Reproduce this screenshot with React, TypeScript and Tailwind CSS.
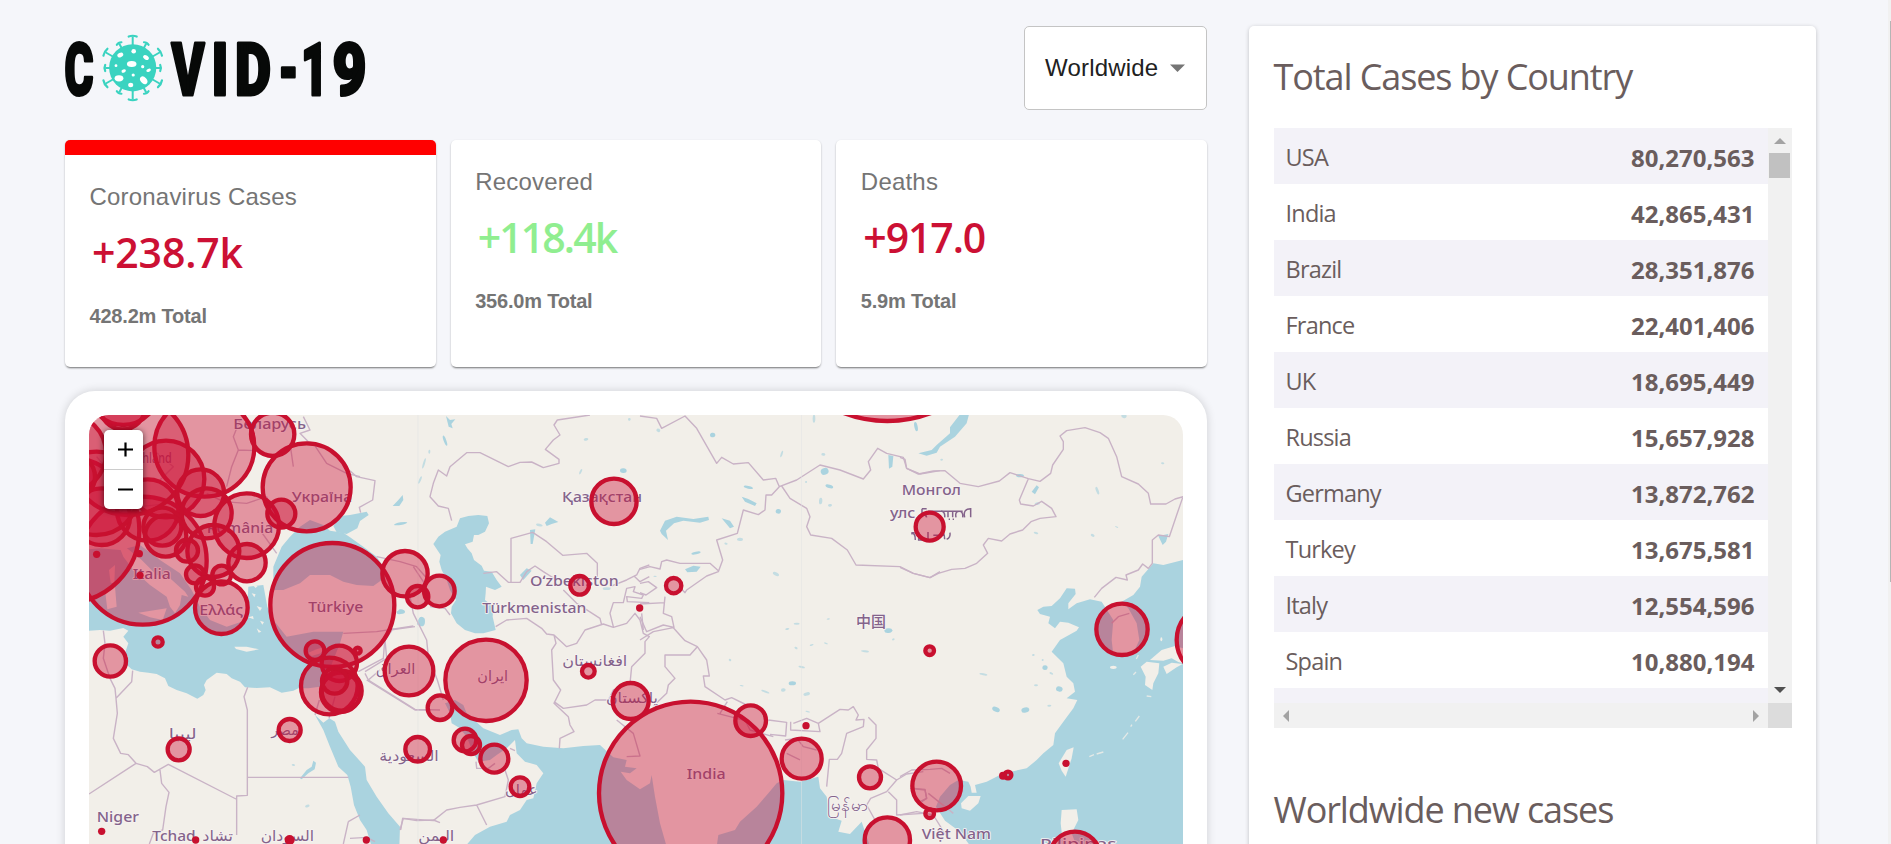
import type { ReactNode } from 'react';

const SANS = "font-['Open_Sans','Noto_Sans',sans-serif]";
const ARIAL = "font-['Liberation_Sans',Arial,sans-serif]";

const countries: [string, string][] = [
  ['USA', '80,270,563'],
  ['India', '42,865,431'],
  ['Brazil', '28,351,876'],
  ['France', '22,401,406'],
  ['UK', '18,695,449'],
  ['Russia', '15,657,928'],
  ['Germany', '13,872,762'],
  ['Turkey', '13,675,581'],
  ['Italy', '12,554,596'],
  ['Spain', '10,880,194'],
  ['Argentina', '8,878,486'],
];

/* Wordmark letters: glyph, x of the ink start, advance width */
const letters: [string, number, number][] = [
  ['C', 64.5, 29],
  ['V', 171.5, 33],
  ['I', 211.5, 17],
  ['D', 235, 36],
  ['-', 278.5, 20],
  ['1', 301, 27],
  ['9', 332.5, 34],
];

function Spike({ angle, from, to, cap }: { angle: number; from: number; to: number; cap: number }) {
  return (
    <g transform={`rotate(${angle})`}>
      <path d={`M0 ${-from}V${-to}`} strokeWidth={2} />
      <path d={`M${-cap} ${-to}Q0 ${-to - 1.5} ${cap} ${-to}`} strokeWidth={2.2} strokeLinecap="round" />
    </g>
  );
}

function Logo() {
  return (
    <svg className="h-[84px] w-[310px] overflow-visible" viewBox="65 26 310 84" role="img" aria-label="COVID-19">
      <g
        fontFamily="Roboto, sans-serif"
        fontWeight={900}
        fontSize={72}
        fill="#070908"
        stroke="#070908"
        strokeWidth={3}
        strokeLinejoin="round"
      >
        {letters.map(([c, x, w]) => (
          <text key={x} x={x} y={94.6} textLength={w} lengthAdjust="spacingAndGlyphs">
            {c}
          </text>
        ))}
      </g>
      <g transform="translate(132.7 68)" stroke="#3ad3c0" fill="none">
        {[0, 180].map((a) => <Spike key={a} angle={a} from={22} to={31.5} cap={4} />)}
        {[90, 270].map((a) => <Spike key={a} angle={a} from={22} to={27.5} cap={3} />)}
        {[60, 120, 240, 300].map((a) => <Spike key={a} angle={a} from={22} to={31.5} cap={4} />)}
        {[29, 151, 209, 331].map((a) => <Spike key={a} angle={a} from={22} to={28} cap={2.6} />)}
      </g>
      <circle cx={132.7} cy={67.8} r={23.6} fill="#3ad3c0" />
      <g fill="#fff">
        <ellipse cx={120.3} cy={55} rx={3.1} ry={2.2} transform="rotate(-25 120.3 55)" />
        <circle cx={133.7} cy={51.3} r={2.3} />
        <ellipse cx={146} cy={57.5} rx={3.1} ry={2.1} transform="rotate(35 146 57.5)" />
        <ellipse cx={131.7} cy={64} rx={4.8} ry={3} />
        <circle cx={116} cy={65.7} r={1.4} />
        <ellipse cx={123.7} cy={71} rx={2.3} ry={1.6} transform="rotate(-25 123.7 71)" />
        <circle cx={142.7} cy={66.7} r={1.6} />
        <ellipse cx={148.6} cy={70.3} rx={2.4} ry={1.5} transform="rotate(-25 148.6 70.3)" />
        <circle cx={133.2} cy={75} r={1.6} />
        <ellipse cx={119} cy={78.3} rx={4.4} ry={3.1} />
        <ellipse cx={143.7} cy={80.3} rx={3} ry={4.4} transform="rotate(-40 143.7 80.3)" />
        <ellipse cx={130.7} cy={85} rx={2.6} ry={2.2} />
      </g>
    </svg>
  );
}

/* The map is split in strips, each with its own origin and three units to a pixel. */
function Strip({ x, y, children }: { x: number; y: number; children: ReactNode }) {
  return <g transform={`translate(${x} ${y}) scale(0.33333)`}>{children}</g>;
}

type C = [number, number, number];
const europe: C[] = [
  [248, 542, 192], [20, 450, 218], [263, 390, 92], [433, 200, 150], [318, 297, 115], [205, 225, 180],
  [422, 338, 70], [440, 400, 75], [560, 437, 97], [740, 322, 132], [638, 163, 65], [664, 401, 42],
  [561, 548, 56], [460, 513, 78], [307, 440, 57], [317, 468, 62], [381, 512, 33], [405, 583, 27],
  [435, 620, 27], [485, 585, 28], [484, 683, 79], [125, 410, 85], [110, 340, 125], [190, 30, 105],
  [188, 80, 68], [20, 220, 118], [40, 290, 65],
];
const africa: C[] = [
  [817, 15, 186], [151, 183, 47], [294, 126, 14], [356, 448, 33], [689, 390, 33], [765, 152, 28],
  [838, 190, 53], [893, 152, 9], [808, 258, 85], [842, 277, 59], [845, 272, 60], [824, 243, 38], [1047, 213, 73],
];
const middle: C[] = [
  [165, 521, 68], [203, 590, 32], [268, 573, 46], [408, 841, 122], [270, 923, 37], [345, 1020, 34],
  [363, 1035, 27], [433, 1076, 42], [510, 1160, 28], [203, 1048, 37], [792, 304, 68], [689, 556, 28],
  [715, 814, 19], [842, 903, 54],
];
const asia: C[] = [
  [152, 1180, 275], [101, 557, 23], [332, 962, 46], [485, 1076, 60], [690, 1132, 33], [742, 1320, 68], [742, -307, 370],
];
const east: C[] = [
  [89, 380, 42], [89, 752, 13], [110, 1158, 73], [89, 1241, 13], [666, 688, 77], [940, 720, 110],
  [324, 1125, 10], [525, 1371, 76],
];

function Circles({ list, dots = [] }: { list: C[]; dots?: C[] }) {
  return (
    <>
      {list.map(([x, y, r], i) => (
        <circle key={i} cx={x} cy={y} r={r} fill="#CC1034" fillOpacity={0.4} stroke="#C8102F" strokeWidth={13} />
      ))}
      {dots.map(([x, y, r], i) => (
        <circle key={`d${i}`} cx={x} cy={y} r={r} fill="#C8102F" />
      ))}
    </>
  );
}

function Label({ x, y, w, size = 45, children }: { x: number; y: number; w: number; size?: number; children: string }) {
  return (
    <text x={x} y={y} fontSize={size} textLength={w} lengthAdjust="spacingAndGlyphs">
      {children}
    </text>
  );
}

function Lakes({ list }: { list: [number, number, number, number][] }) {
  return (
    <>
      {list.map(([x, y, rx, ry], i) => (
        <ellipse
          key={i}
          cx={x}
          cy={y}
          rx={rx}
          ry={ry}
          opacity={rx * ry > 50 ? 1 : 0.65}
          transform={`rotate(${((i * 37) % 50) - 20} ${x} ${y})`}
        />
      ))}
    </>
  );
}

function WorldMap() {
  return (
    <svg className="block h-full w-full" viewBox="89 415 1094 429">
      <rect x={89} y={415} width={1094} height={429} fill="#f2efe9" />
      <g fill="#aad3df">
        <Strip x={60} y={600}>
          <path d="M60 -150L120 -155L180 -150L240 -165L300 -120L360 -80L395 -30L420 20L450 60L500 80L560 60L565 -40L610 -45L622 20L640 60L680 110L760 95L850 95L840 130L800 230L780 260L745 265L715 265L700 272L665 278L630 262L590 264L555 262L540 245L515 235L500 222L470 218L440 240L432 255L437 270L430 285L412 296L380 280L350 270L325 258L315 235L290 222L265 218L240 215L215 208L195 190L205 170L195 160L205 130L190 110L205 92L190 84L150 92L120 90L87 92L60 90Z" />
          <path d="M765 345L790 368L808 355L825 365L835 395L870 450L915 500L920 540L950 590L985 640L1020 680L1018 740L935 740L920 690L900 660L882 615L872 560L862 525L835 500L810 440L790 390Z" />
          <path d="M720 535L740 510L755 500L760 482L768 488L764 508L745 520L725 538Z" />
          <Lakes list={[[742, 618, 7, 4], [700, 495, 5, 3], [1085, 65, 10, 14], [1022, 36, 12, 6]]} />
          <g fill="#f2efe9">
            <path d="M170 -180L245 -120L290 -75L330 -65L375 -25L385 -10L365 -15L360 15L345 40L330 20L320 -10L270 -45L220 -90L190 -130Z" />
            <path d="M235 38L320 25L308 60L270 52Z" />
            <path d="M135 -30L165 -40L170 20L142 28Z" />
            <path d="M147 -90L165 -105L163 -50L152 -52Z" />
            <path d="M523 140L560 140L597 148L560 155L528 147Z" />
            <path d="M405 -60L430 20L450 10L480 70L500 50L540 20L520 -20L562 -55Z" />
            <path d="M575 -20l12 3l-4 9zM590 18l16 5l-6 10zM565 52l14 -4l2 10zM600 62l12 4l-5 8zM575 -48l18 6l-6 6zM590 85l14 10l-8 3z" />
            <path d="M745 158L770 148L795 140L782 160L755 168Z" />
          </g>
        </Strip>
        <Strip x={350} y={400}>
          <path d="M-230 500L-205 440L-180 410L-150 380L-120 360L-80 375L-60 392L-20 398L0 412L40 440L80 470L100 500L95 540L70 558L20 555L-20 545L-60 525L-120 525L-150 550L-200 570L-230 570Z" />
          <path d="M-50 378L-30 348L0 345L50 335L56 345L30 363L22 385L-10 402L-40 397Z" />
          <path d="M355 348L385 345L412 348L417 370L405 395L385 405L372 405L368 425L345 433L352 445L365 460L372 480L395 497L402 512L425 515L440 540L455 560L435 570L420 565L408 560L407 580L405 600L430 620L428 650L437 690L400 700L375 700L345 690L320 670L303 640L305 620L318 600L300 570L290 540L275 510L268 485L272 465L250 432L265 410L285 395L320 380L330 355Z" />
          <path d="M285 910L315 900L340 915L350 940L400 985L450 1005L485 990L505 988L515 1015L530 1030L580 1040L640 1045L700 1038L750 1035L790 1072L830 1080L825 1100L860 1105L840 1120L812 1115L830 1140L870 1168L900 1150L905 1125L915 1190L930 1270L950 1340L345 1340L375 1305L420 1280L470 1265L480 1245L510 1230L530 1200L550 1195L560 1150L580 1120L560 1095L525 1085L500 1060L495 1020L470 1045L440 1065L420 1080L385 1085L370 1060L350 1010L330 985L305 970L300 940Z" />
          <path d="M128 318L145 300L158 285L160 300L148 318ZM288 48L300 60L316 58L304 72L308 85L296 80ZM585 368L600 352L625 366L605 372L590 378ZM540 390L556 388L548 432L542 432ZM510 525L530 505L545 512L520 540Z" />
          <Lakes list={[[285, 122, 4, 16], [222, 190, 3, 16], [238, 155, 3, 6], [152, 371, 20, 4], [210, 663, 6, 14], [155, 634, 10, 6], [820, 212, 10, 7], [708, 118, 7, 4], [692, 215, 3, 9], [568, 375, 10, 4], [770, 566, 12, 4], [838, 58, 4, 4], [210, 240, 3, 12]]} />
        </Strip>
        <Strip x={640} y={400}>
          <path d="M230 1340L235 1305L285 1290L300 1265L350 1220L385 1180L410 1150L430 1140L480 1145L535 1130L540 1165L560 1190L570 1250L605 1262L595 1295L630 1302L665 1265L690 1340Z" />
          <path d="M60 392L75 362L110 350L160 357L205 350L207 360L180 368L130 362L102 370L78 392L84 420L65 402Z" />
          <path d="M135 508L160 497L182 500L170 515L142 517ZM305 290L325 297L350 310L345 318L315 305ZM745 165L760 168L757 200L747 206ZM245 355L270 362L282 380L270 385Z" />
          <Lakes list={[[554, 214, 12, 10], [568, 259, 12, 5], [542, 303, 5, 10], [218, 105, 8, 7], [55, 91, 6, 5], [415, 334, 8, 7], [300, 418, 9, 5], [168, 459, 14, 4], [408, 522, 10, 5], [325, 262, 14, 4], [470, 671, 9, 3], [442, 687, 6, 3], [468, 744, 5, 3], [485, 801, 10, 3], [457, 850, 11, 6], [500, 882, 10, 5], [376, 875, 13, 3], [305, 857, 6, 2], [430, 870, 7, 5], [515, 735, 6, 2], [558, 730, 6, 2], [675, 754, 12, 3], [745, 692, 12, 7], [760, 718, 4, 3], [425, 162, 3, 10], [550, 163, 6, 4], [570, 316, 6, 4], [498, 246, 3, 3], [258, 431, 5, 3], [45, 529, 5, 2], [565, 657, 5, 2], [270, 780, 4, 3], [503, 935, 7, 2], [522, 56, 4, 12], [828, 80, 5, 14]]} />
        </Strip>
        <Strip x={900} y={400}>
          <path d="M212 1340L180 1295L135 1262L108 1220L120 1190L150 1155L175 1140L205 1145L212 1160L215 1178L230 1178L225 1155L260 1145L310 1120L380 1105L410 1080L430 1060L460 1035L465 1000L490 965L520 925L532 900L500 895L525 875L520 850L500 830L490 790L455 755L480 720L530 692L537 682L505 668L480 665L465 685L445 670L450 650L420 642L412 630L430 620L455 618L480 595L500 565L525 566L527 582L505 610L505 628L530 610L570 598L605 605L640 660L635 720L640 765L700 760L718 720L710 670L685 625L665 605L700 585L720 560L725 530L760 490L790 495L850 480L850 1340Z" />
          <path d="M180 43L207 43L200 70L165 110L120 140L110 158L80 167L55 160L95 150L110 135L150 100L150 82Z" />
          <path d="M775 408L805 402L798 425L788 435ZM395 275L410 256L417 262L405 283Z" />
          <Lakes list={[[592, 272, 4, 12], [672, 48, 8, 6], [360, 227, 12, 5], [412, 311, 8, 4], [578, 406, 6, 4], [408, 399, 7, 3], [435, 803, 8, 7], [428, 780, 3, 3], [454, 820, 6, 3], [478, 867, 10, 8], [408, 856, 6, 3], [376, 930, 12, 8], [288, 928, 12, 7], [250, 823, 12, 3], [448, 917, 6, 3], [400, 765, 4, 3], [650, 381, 5, 2], [788, 190, 5, 3], [125, 179, 4, 3]]} />
          <g fill="#f2efe9">
            <path d="M183 1210L205 1188L242 1188L235 1210L210 1232L185 1225Z" />
            <path d="M476 1090L500 1050L521 1042L515 1075L497 1130L485 1112Z" />
            <path d="M485 1230L530 1228L535 1260L515 1300L530 1340L490 1340L482 1270Z" />
            <path d="M722 800L740 785L778 790L775 820L760 850L757 870L735 855L737 830Z" />
            <path d="M750 780L785 750L825 738L850 745L850 790L835 786L815 775L790 782Z" />
            <path d="M790 800L815 788L848 792L830 802L800 822Z" />
            <ellipse cx={640} cy={802} rx={10} ry={5} />
            <ellipse cx={784} cy={718} rx={3} ry={6} />
          </g>
          <g fill="none" stroke="#f2efe9" strokeWidth={4} opacity={0.8}>
            <path d="M718 948l-12 16M696 974l-4 6M684 998l-16 20M568 1070l14 -6M590 1062l20 -6M740 888l14 2M715 765l-6 12M700 824l8 -8" />
          </g>
        </Strip>
      </g>

      <g fill="none" stroke="#c9b3c6" strokeWidth={4.2} strokeLinejoin="round">
        <Strip x={60} y={600}>
          <path d="M130 92L135 130L130 175L150 235L165 265L168 295L215 245L218 212M168 295L172 340L160 415L182 460L205 464L228 490L87 582M228 490L262 500L283 517L325 493L528 597M300 510L305 550L327 577L318 620L308 690L280 700L268 732M563 262L552 290L562 330L562 586L530 588L530 705M562 532L865 532M765 345L778 300M807 355L825 290M865 665L900 645M865 665L850 732M870 715L920 712L945 725M1022 690L1028 655L1070 662L1120 660L1140 668M895 215L970 175L975 110M915 220L925 240L1065 328L1140 330M925 240L960 210M850 100L950 95L1060 78" />
        </Strip>
        <Strip x={60} y={380}>
          <path d="M540 120L520 170L535 210L515 260L500 320M535 210L590 212M690 190L700 260M730 110L750 150L720 160L745 185L760 190L800 250L860 280L900 290M440 340L490 365L560 370L620 350L650 420M430 440L470 455M280 210L340 260L300 300M240 380L330 370L380 410M600 450L650 520M110 230L150 280M170 300L230 340L180 400" />
        </Strip>
        <Strip x={350} y={400}>
          <path d="M0 212L20 230L75 242L68 300L28 322L32 338M305 362L295 325L265 318L240 290L250 250L265 210L290 228L300 200L350 158L390 158L475 200L510 187L545 186L580 203L627 190L627 178L586 148L610 120L630 105L612 75L622 60L720 45M483 545L483 415L548 397L590 425L638 466L710 460L742 490L742 530M400 520L440 515L475 547L510 547L530 515L555 498L580 515L620 540M640 570L680 610L750 655L755 675M437 680L470 660L530 655L575 685L590 702L612 705L650 740L680 730L705 690L760 672L790 682L830 670L855 640L870 660L880 700L898 710L885 725L885 760L845 800L840 850L790 870L775 900L735 900L710 915L640 925L612 905M612 705L618 730L605 750L610 840L632 870L612 910L655 950L660 975L672 995L630 1015L628 1045M780 560L830 540L860 525L870 505L898 495M898 530L870 545L852 528M790 680L780 640L790 608L820 608L830 565L855 560L850 575L880 585L875 595L830 590L832 605L898 608M875 640L880 690M80 470L150 485L200 500L235 540M180 590L190 640L230 720L235 770L262 840L280 900M120 690L195 680M45 815L110 775L105 720L130 685M50 840L195 930L240 930M190 500L230 560M240 620L285 625L300 645M465 1110L475 1140L465 1190L380 1215L330 1222L290 1230L250 1262L160 1255L150 1290M380 1215L410 1275M378 1085L380 1105L415 1105L435 1090M480 1045L495 1052M800 960L850 1000L870 1068L830 1070" />
        </Strip>
        <Strip x={640} y={400}>
          <path d="M0 48L50 55L65 85L135 48L170 85L230 190L245 172L280 192L325 188L370 240L407 235L418 260L395 285L378 285L375 330L355 344L310 330L292 400L230 420L248 480L235 515L200 528L140 570L135 578L118 560M418 260L470 240L540 195L600 210L670 237L692 210L685 185L713 145L740 160L790 172L800 205L840 222L900 212M425 258L450 295L500 325L510 350L500 380L512 405L575 415L622 450L648 495L780 500L820 520L870 533L900 515M0 508L30 500L60 507L65 485L80 480L120 490L210 490L235 512M0 550L25 545L50 563L18 585L0 578M75 590L70 640L95 650L102 682L70 675L20 695L0 650M0 612L75 608M0 720L40 695L100 683L135 722L172 740L200 780L208 828L190 828L195 860L255 900L275 893L320 915M172 740L150 765L75 765L75 800L105 835L85 855L80 880L40 918M385 960L440 967L437 1008L390 1003M452 965L452 990L540 995L535 970L500 955L460 970M535 970L600 928L625 930L640 920L655 945L648 960L672 958L670 980L620 1000L605 1060L592 1078L568 1078L560 1160M685 952L708 975L708 1015L680 1050L680 1078L710 1080L715 1105L770 1140L740 1175L692 1195L680 1215L705 1260M770 1140L800 1122L850 1115M745 1175L770 1200L770 1245L850 1240M810 1165L855 1170L860 1195L840 1205M435 1020L470 1015L490 1040L530 1050M440 1060L480 1080M232 940L270 950L310 960M240 940L262 905M310 950L330 990L400 1010" />
        </Strip>
        <Strip x={900} y={400}>
          <path d="M0 172L15 178L20 205L55 222L100 213L135 212L180 250L235 260L298 243L330 218L385 236L420 244L452 220L458 195L490 148L490 125L480 108L500 92L555 83L600 98L625 115L650 170L665 230L715 252L745 280L752 312L798 312L825 297L849 290L830 345L808 410L775 405L757 420L757 490L745 505L728 492L715 510L678 525L682 540L648 532L605 565L583 592M385 236L358 300L362 312L400 318L425 304L455 325L468 350L420 355L393 365L368 390L330 402L305 423L265 415L250 435L263 460L230 490L195 505L155 508L115 520L90 533L40 520L0 502M635 670L655 650L688 640M0 1130L35 1110L90 1108L125 1105L150 1120M40 1165L75 1168L80 1195L65 1205M0 1245L50 1235L100 1245L140 1310M85 1180L160 1240" />
        </Strip>
      </g>

      <path d="M418 415V844M801.5 415V844" stroke="#e2e4e4" strokeWidth={0.7} opacity={0.7} />

      <g
        fontFamily="'Noto Sans', 'DejaVu Sans', sans-serif"
        fontWeight={500}
        fill="#84638b"
        stroke="#f7f3f2"
        strokeWidth={5}
        strokeLinejoin="round"
        paintOrder="stroke"
      >
        <Strip x={60} y={380}>
          <Label x={520} y={147} w={218}>Беларусь</Label>
          <Label x={140} y={250} w={195}>Deutschland</Label>
          <Label x={695} y={366} w={182}>Україна</Label>
          <Label x={440} y={458} w={200}>România</Label>
          <Label x={218} y={598} w={114}>Italia</Label>
          <Label x={418} y={704} w={132}>Ελλάς</Label>
          <Label x={745} y={697} w={165}>Türkiye</Label>
        </Strip>
        <Strip x={60} y={600}>
          <Label x={326} y={418} w={84}>ليبيا</Label>
          <Label x={634} y={405} w={82}>مصر</Label>
          <Label x={948} y={222} w={118}>العراق</Label>
          <Label x={110} y={667} w={127}>Niger</Label>
          <Label x={277} y={724} w={130}>Tchad</Label>
          <Label x={427} y={722} w={92}>تشاد</Label>
          <Label x={602} y={724} w={160}>السودان</Label>
          <Label x={958} y={482} w={178}>السعودية</Label>
        </Strip>
        <Strip x={350} y={400}>
          <Label x={636} y={305} w={240}>Қазақстан</Label>
          <Label x={540} y={557} w={266}>Oʻzbekiston</Label>
          <Label x={397} y={640} w={312}>Türkmenistan</Label>
          <Label x={382} y={844} w={92}>ایران</Label>
          <Label x={637} y={797} w={195}>افغانستان</Label>
          <Label x={768} y={908} w={156}>پاکستان</Label>
          <Label x={465} y={1184} w={98}>عمان</Label>
          <Label x={205} y={1322} w={108}>اليمن</Label>
        </Strip>
        <Strip x={640} y={400}>
          <Label x={140} y={1137} w={117}>India</Label>
          <text x={562} y={1232} fontSize={46} textLength={124} lengthAdjust="spacingAndGlyphs">မြန်မာ</text>
          <text x={648} y={682} fontSize={45} fontFamily="'Noto Sans CJK SC', sans-serif">中国</text>
        </Strip>
        <Strip x={900} y={400}>
          <Label x={5} y={284} w={178}>Монгол</Label>
          <Label x={-30} y={354} w={76}>улс</Label>
          <Label x={65} y={1317} w={208}>Việt Nam</Label>
          <Label x={420} y={1348} w={230}>Pilipinas</Label>
        </Strip>
      </g>
      <Strip x={900} y={400}>
        <g fill="none" stroke="#84638b" strokeWidth={4.5}>
          <path d="M66 326h14M66 326v14q12 4 14 12M84 334h104M124 332q12 4 10 20M144 334v18M158 334v18M168 352q-4 -18 10 -18q12 0 10 18M194 352q-6 -26 18 -26v26M146 358h4M158 358h4" />
          <path d="M34 402q12 -6 12 18M56 396v24h22M84 396v24M34 398h10M100 406h30M130 398q4 8 4 20M140 418q12 -4 10 -20" />
        </g>
      </Strip>

      <Strip x={60} y={380}>
        <Circles list={europe} dots={[[110, 523, 11], [238, 521, 11], [240, 586, 11]]} />
      </Strip>
      <Strip x={60} y={600}>
        <Circles list={africa} dots={[[125, 694, 11], [407, 720, 11], [689, 720, 15], [919, 720, 11]]} />
      </Strip>
      <Strip x={350} y={400}>
        <Circles list={middle} dots={[[869, 624, 11], [280, 1320, 11]]} />
      </Strip>
      <Strip x={640} y={400}>
        <Circles list={asia} dots={[[498, 977, 11]]} />
      </Strip>
      <Strip x={900} y={400}>
        <Circles list={east} dots={[[309, 1127, 12], [498, 1090, 11]]} />
      </Strip>
    </svg>
  );
}

function InfoBox(props: { title: string; value: string; total: string; tone: string; active?: boolean }) {
  return (
    <div
      className={`h-[227px] flex-1 rounded-[5px] bg-white px-6 shadow-[0_3px_2px_-2px_rgba(0,0,0,0.3),0_1px_2px_rgba(0,0,0,0.3)] ${
        props.active ? 'border-t-[15px] border-[#ff0000]' : ''
      }`}
    >
      <p className={`pl-[0.5px] pt-[26px] text-[24px] leading-8 tracking-[0.2px] text-[#757575] ${ARIAL}`}>{props.title}</p>
      <p className={`mt-[14px] pl-[3px] text-[41px] font-semibold leading-[50px] ${SANS} ${props.tone}`}>{props.value}</p>
      <p className={`mt-[27px] pl-[0.5px] text-[20px] font-bold leading-6 tracking-[-0.2px] text-[#757575] ${ARIAL}`}>
        {props.total}
      </p>
    </div>
  );
}

export default function App() {
  return (
    <div className="flex h-[844px] w-full overflow-hidden bg-[#f5f6fa]">
      <div className="ml-[65px] mt-[26px] w-[1142px] shrink-0">
        <div className="flex h-[84px] justify-between">
          <Logo />
          <div className="flex h-[84px] w-[183px] items-center rounded-[5px] border border-[#c4c4c4] bg-white pl-[20px]">
            <span className={`text-[24px] tracking-[0.2px] text-[#212121] ${ARIAL}`}>Worldwide</span>
            <svg className="ml-[12px] h-[8px] w-[15px]" viewBox="0 0 15 8">
              <path d="M0 0.5H15L7.5 8Z" fill="#757575" />
            </svg>
          </div>
        </div>
        <div className="mt-[30px] flex gap-[15px]">
          <InfoBox title="Coronavirus Cases" value="+238.7k" total="428.2m Total" tone="tracking-[-0.15px] text-[#cc1034]" active />
          <InfoBox title="Recovered" value="+118.4k" total="356.0m Total" tone="tracking-[-1.9px] text-[#90ee90]" />
          <InfoBox title="Deaths" value="+917.0" total="5.9m Total" tone="tracking-[-1.1px] text-[#cc1034]" />
        </div>
        <div className="mt-6 h-[625px] rounded-[30px] bg-white p-6 shadow-[0_0_10px_rgba(0,0,0,0.16)]">
          <div className="relative h-[429px] overflow-hidden rounded-t-[20px]">
            <WorldMap />
            <div className="absolute left-[15px] top-[15px] flex h-[79px] w-[39px] flex-col rounded-[5px] bg-white shadow-[0_1px_6px_rgba(0,0,0,0.65)]">
              <div className="flex flex-1 items-center justify-center border-b border-[#ccc] pl-[3px]">
                <svg className="h-[15px] w-[15px]" viewBox="0 0 15 15">
                  <path d="M7.5 0.5V14.5M0 7.5H15" stroke="#000" strokeWidth={2.2} />
                </svg>
              </div>
              <div className="flex flex-1 items-center justify-center pl-[3px] pt-px">
                <svg className="h-[15px] w-[15px]" viewBox="0 0 15 15">
                  <path d="M0 7.5H15" stroke="#000" strokeWidth={2.2} />
                </svg>
              </div>
            </div>
          </div>
        </div>
      </div>

      <div className={`ml-[42px] mt-[26px] h-[900px] w-[567px] shrink-0 rounded-[5px] bg-white pl-[24.5px] shadow-[0_1px_4px_rgba(0,0,0,0.22)] ${SANS}`}>
        <h3 className="whitespace-nowrap pt-[26px] text-[36px] leading-[50px] tracking-[-1.1px] text-[#6a5d5d]">
          Total Cases by Country
        </h3>
        <div className="mt-[26px] flex h-[575px] w-[518px]">
          <div className="w-[494px] shrink-0 overflow-hidden">
            {countries.map(([name, cases], i) => (
              <div
                key={name}
                className={`flex h-14 items-center justify-between pl-3 pr-[13px] pt-[3px] text-[23.5px] text-[#6a5d5d] ${
                  i % 2 === 0 ? 'bg-[#f3f2f8]' : 'bg-white'
                }`}
              >
                <span className="tracking-[-0.8px]">{name}</span>
                <strong className="text-[24px] font-bold">{cases}</strong>
              </div>
            ))}
          </div>
          <div className="flex w-6 shrink-0 flex-col items-center bg-[#f1f1f1]">
            <svg className="mt-[10px] h-[6px] w-3" viewBox="0 0 12 6">
              <path d="M6 0L12 6H0Z" fill="#a3a3a3" />
            </svg>
            <div className="mt-[9px] h-[25px] w-[21px] bg-[#c1c1c1]" />
            <svg className="mb-[10px] mt-auto h-[6px] w-3" viewBox="0 0 12 6">
              <path d="M0 0H12L6 6Z" fill="#505050" />
            </svg>
          </div>
        </div>
        <div className="flex h-[25px] w-[518px]">
          <div className="flex w-[494px] items-center justify-between bg-[#f1f1f1] px-[9px]">
            <svg className="h-3 w-[6px]" viewBox="0 0 6 12">
              <path d="M6 0V12L0 6Z" fill="#a3a3a3" />
            </svg>
            <svg className="h-3 w-[6px]" viewBox="0 0 6 12">
              <path d="M0 0V12L6 6Z" fill="#a3a3a3" />
            </svg>
          </div>
          <div className="w-6 bg-[#dcdcdc]" />
        </div>
        <h3 className="mt-[57px] whitespace-nowrap text-[36px] leading-[50px] tracking-[-1.1px] text-[#6a5d5d]">
          Worldwide new cases
        </h3>
      </div>

      <div className="ml-auto flex w-[3px] flex-col items-end bg-[#f1f1f1] pt-[21px]">
        <div className="h-[561px] w-px bg-[#b5b5b5]" />
      </div>
    </div>
  );
}
